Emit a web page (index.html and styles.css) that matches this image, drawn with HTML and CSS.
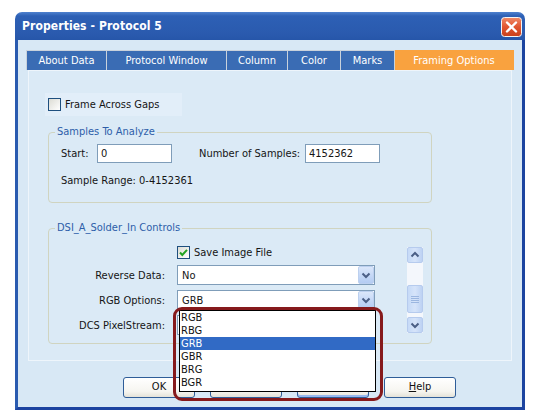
FILE: index.html
```html
<!DOCTYPE html>
<html>
<head>
<meta charset="utf-8">
<title>Properties - Protocol 5</title>
<link rel="stylesheet" href="styles.css">
</head>
<body>
<div class="window">
  <div class="titlebar">
    <span class="title">Properties - Protocol 5</span>
    <span class="close">
      <svg width="21" height="20" viewBox="0 0 21 20">
        <defs>
          <linearGradient id="cg" x1="0" y1="0" x2="0" y2="1">
            <stop offset="0" stop-color="#f08a68"/>
            <stop offset="0.5" stop-color="#e0552f"/>
            <stop offset="1" stop-color="#c9401c"/>
          </linearGradient>
        </defs>
        <rect x="0.5" y="0.5" width="20" height="19" rx="3" fill="url(#cg)" stroke="#f4f4f4"/>
        <path d="M6 5.5 L15 14.5 M15 5.5 L6 14.5" stroke="#fff" stroke-width="2.4" stroke-linecap="round"/>
      </svg>
    </span>
  </div>
  <div class="body">
    <div class="tabs">
      <div class="tab t1">About Data</div>
      <div class="tab t2">Protocol Window</div>
      <div class="tab t3">Column</div>
      <div class="tab t4">Color</div>
      <div class="tab t5">Marks</div>
      <div class="tab t6 active">Framing Options</div>
    </div>
    <div class="panel">
      <div class="gaps"><span class="check"></span><span>Frame Across Gaps</span></div>

      <fieldset class="group g1">
        <legend>Samples To Analyze</legend>
        <div class="row1">
          <span class="lbl-start">Start:</span>
          <span class="input">0</span>
          <span class="lbl-num">Number of Samples:</span>
          <span class="input">4152362</span>
        </div>
        <div class="range">Sample Range: 0-4152361</div>
      </fieldset>

      <fieldset class="group g2">
        <legend>DSI_A_Solder_In Controls</legend>
        <div class="g2-inner">
          <div class="form">
            <span class="flabel"></span>
            <div class="save">
              <span class="check checked">
                <svg width="13" height="13" viewBox="0 0 13 13"><path d="M3 6.5 L5.3 9 L10 3.8" fill="none" stroke="#22a322" stroke-width="2"/></svg>
              </span>
              <span>Save Image File</span>
            </div>

            <span class="flabel">Reverse Data:</span>
            <div class="select">
              <span class="val">No</span>
              <span class="arrow"><svg width="16" height="18" viewBox="0 0 16 18"><path d="M4.5 7.5 L8 11 L11.5 7.5" fill="none" stroke="#4b5f86" stroke-width="2"/></svg></span>
            </div>

            <span class="flabel">RGB Options:</span>
            <div class="select open">
              <span class="val">GRB</span>
              <span class="arrow"><svg width="16" height="18" viewBox="0 0 16 18"><path d="M4.5 7.5 L8 11 L11.5 7.5" fill="none" stroke="#4b5f86" stroke-width="2"/></svg></span>
              <ul class="list">
                <li>RGB</li>
                <li>RBG</li>
                <li class="sel">GRB</li>
                <li>GBR</li>
                <li>BRG</li>
                <li>BGR</li>
              </ul>
              <div class="mark"></div>
            </div>

            <span class="flabel">DCS PixelStream:</span>
            <div class="select">
              <span class="val"></span>
              <span class="arrow"><svg width="16" height="18" viewBox="0 0 16 18"><path d="M4.5 7.5 L8 11 L11.5 7.5" fill="none" stroke="#4b5f86" stroke-width="2"/></svg></span>
            </div>
          </div>

          <div class="scrollbar">
            <span class="sbtn"><svg width="14" height="14" viewBox="0 0 14 14"><path d="M3.5 8.5 L7 5 L10.5 8.5" fill="none" stroke="#4b5f86" stroke-width="2"/></svg></span>
            <span class="track"></span>
            <span class="thumb"><svg width="8" height="9" viewBox="0 0 8 9"><path d="M0 1.5 H8 M0 3.5 H8 M0 5.5 H8 M0 7.5 H8" stroke="#9bb6e0" stroke-width="1"/></svg></span>
            <span class="track short"></span>
            <span class="sbtn"><svg width="14" height="14" viewBox="0 0 14 14"><path d="M3.5 5.5 L7 9 L10.5 5.5" fill="none" stroke="#4b5f86" stroke-width="2"/></svg></span>
          </div>
        </div>
      </fieldset>
    </div>

    <div class="buttons">
      <span class="btn">OK</span>
      <span class="btn">Cancel</span>
      <span class="btn focus">Apply</span>
      <span class="btn"><u>H</u>elp</span>
    </div>
  </div>
</div>
</body>
</html>
```

FILE: styles.css
```css
* { box-sizing: border-box; }

body {
  margin: 0;
  background: #ffffff;
  font-family: "DejaVu Sans Condensed", "Liberation Sans", sans-serif;
  font-size: 11px;
  color: #151515;
}

.window {
  margin: 12px 0 0 15px;
  width: 510px;
  height: 398px;
  display: flex;
  flex-direction: column;
}

.titlebar {
  flex: none;
  height: 28px;
  border-radius: 7px 7px 0 0;
  background: linear-gradient(#4f82cf, #2d60b5 4px, #2a5aae 22px, #2656a9);
  display: flex;
  align-items: center;
  justify-content: space-between;
  padding: 0 3px 0 7px;
}

.title {
  color: #ffffff;
  font-weight: bold;
  font-size: 12px;
  letter-spacing: 0.1px;
}

.close {
  display: flex;
  width: 21px;
  height: 20px;
  margin-top: 2px;
}

.body {
  flex: 1;
  background: #d8e8f5;
  border: 3px solid #2a5bb0;
  border-top: 0;
  border-right-color: #1c44a0;
  border-bottom-color: #1c43a0;
  padding: 10px 0 0 8px;
}

.tabs {
  display: flex;
  height: 20px;
}

.tab {
  display: flex;
  align-items: center;
  justify-content: center;
  color: #ffffff;
  background: #3a6cb4;
  border: 1px solid #c9d2dc;
  border-bottom: 0;
  border-left-width: 0;
}

.tab.t1 { width: 81px; border-left-width: 1px; }
.tab.t2 { width: 120px; }
.tab.t3 { width: 61px; }
.tab.t4 { width: 53px; }
.tab.t5 { width: 54px; }
.tab.t6 { width: 119px; }

.tab.active {
  background: #f9a23f;
  border-color: #f9a23f;
}

.panel {
  margin-left: 2px;
  width: 484px;
  height: 291px;
  border: 1px solid #eef5fb;
  background: #dbeaf6;
  padding: 22px 0 0 16px;
}

.gaps {
  display: flex;
  align-items: center;
  gap: 4px;
  width: 137px;
  height: 23px;
  padding-left: 3px;
  background: #e2eef9;
}

.check {
  display: inline-flex;
  width: 13px;
  height: 13px;
  flex: none;
  border: 1px solid #1e4f7e;
  background: linear-gradient(135deg, #dcdcd4, #ffffff);
}

.check.checked svg {
  margin: -1px;
}

.group {
  margin: 9px 0 0 3px;
  width: 384px;
  min-width: 0;
  border: 1px solid #d0d4c0;
  border-radius: 4px;
  padding: 5px 12px 14px 12px;
}

.group legend {
  margin-left: -6px;
  padding: 0 2px;
  line-height: 14px;
  color: #2d5ea9;
}

.row1 {
  display: flex;
  align-items: center;
  height: 19px;
}

.lbl-start { width: 36px; }

.lbl-num {
  width: 106px;
  margin-left: 27px;
}

.input {
  display: flex;
  align-items: center;
  width: 75px;
  height: 19px;
  padding-left: 3px;
  background: #ffffff;
  border: 1px solid #7f9db9;
}

.range {
  margin-top: 11px;
  line-height: 14px;
}

.group.g2 {
  margin-top: 18px;
  padding: 12px 12px 8px 12px;
}

.g2-inner {
  display: flex;
  align-items: flex-start;
}

.form {
  display: grid;
  grid-template-columns: 104px 198px;
  grid-auto-rows: 20px;
  grid-template-rows: 13px;
  column-gap: 12px;
  row-gap: 5px;
  align-items: center;
}

.flabel {
  text-align: right;
}

.save {
  display: flex;
  align-items: center;
  gap: 4px;
  height: 13px;
  margin-bottom: 3px;
}

.select {
  position: relative;
  display: flex;
  align-items: center;
  height: 20px;
  background: #ffffff;
  border: 1px solid #7f9db9;
}

.select .val {
  flex: 1;
  padding-left: 4px;
}

.arrow {
  display: flex;
  width: 16px;
  height: 18px;
  background: linear-gradient(#dbe7fa, #c2d6f6 60%, #b4ccf2);
  border: 1px solid #bcd0ef;
  border-radius: 2px;
}

.arrow svg { margin: -1px; }

.list {
  position: absolute;
  top: 19px;
  left: 1px;
  width: 197px;
  height: 82px;
  margin: 0;
  padding: 0;
  list-style: none;
  background: #ffffff;
  border: 1px solid #000000;
  z-index: 5;
}

.list li {
  height: 13px;
  line-height: 13px;
  padding-left: 1px;
  color: #111111;
}

.list li.sel {
  background: #316ac5;
  color: #ffffff;
}

.mark {
  position: absolute;
  left: -5px;
  top: 16px;
  width: 210px;
  height: 94px;
  border: 3px solid #861a1c;
  border-radius: 9px;
  z-index: 6;
}

.scrollbar {
  display: flex;
  flex-direction: column;
  width: 16px;
  height: 86px;
  margin-left: 32px;
  background: #f4f7fc;
}

.sbtn, .thumb {
  display: flex;
  align-items: center;
  justify-content: center;
  height: 16px;
  background: linear-gradient(90deg, #c6daf7, #d6e4fa 50%, #bdd2f3);
  border: 1px solid #b6cbee;
  border-radius: 2px;
}

.track { height: 22px; }
.track.short { height: 4px; }

.thumb { height: 28px; }

.buttons {
  display: flex;
  gap: 15px;
  margin: 16px 0 0 97px;
}

.btn {
  display: flex;
  align-items: center;
  justify-content: center;
  width: 72px;
  height: 21px;
  padding-bottom: 2px;
  border: 1px solid #2f5d98;
  border-radius: 3px;
  background: linear-gradient(#ffffff, #f6f5f0 70%, #e4e2d8);
  color: #111111;
}

.btn.focus {
  box-shadow: inset 0 2px 0 #cfe0fb, inset 0 -2px 0 #98b8ee;
}
```
